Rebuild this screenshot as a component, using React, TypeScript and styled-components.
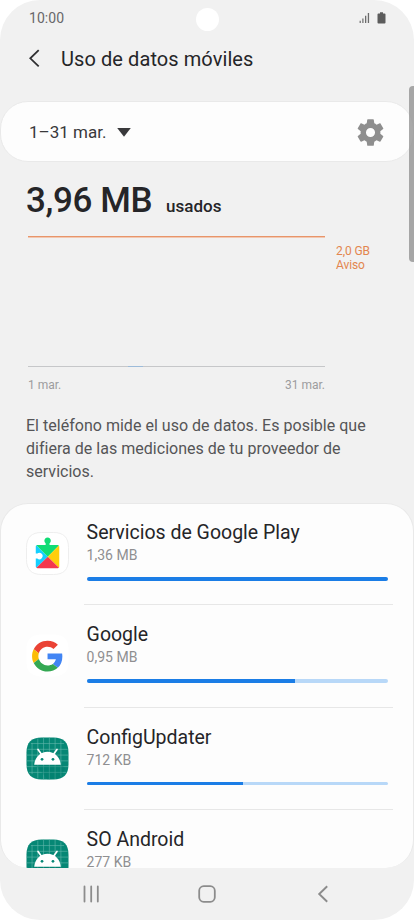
import React from "react";
import styled, { createGlobalStyle } from "styled-components";

const GlobalStyle = createGlobalStyle`
  * { box-sizing: border-box; }
  html, body { margin: 0; padding: 0; background: #fff; }
  body { font-family: Roboto, "Liberation Sans", sans-serif; color: #252528; }
  svg { display: block; flex: none; }
`;

const Screen = styled.div`
  position: relative;
  width: 414px;
  height: 920px;
  background: #f1f1f1;
  border-radius: 40px;
  overflow: hidden;
  display: flex;
  flex-direction: column;
`;

const StatusBar = styled.div`
  height: 36px;
  padding: 0 28px 0 29px;
  display: grid;
  grid-template-columns: 1fr 24px 1fr;
  align-items: center;
`;

const Clock = styled.span`
  font-size: 14px;
  letter-spacing: 0.05px;
  color: #68686a;
`;

const Camera = styled.div`
  width: 23px;
  height: 23px;
  border-radius: 50%;
  background: #fff;
  margin-top: 2px;
`;

const StatusIcons = styled.div`
  display: flex;
  justify-content: flex-end;
  align-items: center;
  gap: 7px;
`;

const Header = styled.header`
  height: 65px;
  padding: 11px 0 0 28px;
  display: flex;
  align-items: flex-start;
  gap: 19px;
`;

const Title = styled.h1`
  margin: 0;
  font-size: 20px;
  line-height: 24px;
  letter-spacing: 0.08px;
  font-weight: 400;
  white-space: nowrap;
`;

const PeriodCard = styled.section`
  height: 61px;
  border: 1px solid #e9e9e9;
  border-radius: 28px;
  background: #fdfdfd;
  padding: 1px 26px 0 28px;
  display: flex;
  align-items: center;
`;

const Period = styled.span`
  font-size: 17px;
  color: #39393b;
  margin-right: 11px;
  white-space: nowrap;
`;

const Spacer = styled.div`
  flex: 1;
`;

const Usage = styled.div`
  height: 74px;
  padding: 18px 0 0 26px;
  display: flex;
  align-items: baseline;
  gap: 14px;
  font-weight: 500;
  white-space: nowrap;
`;

const Amount = styled.span`
  font-size: 35px;
  letter-spacing: -0.4px;
  line-height: 42px;
`;

const AmountLabel = styled.span`
  font-size: 17px;
`;

const Chart = styled.section`
  height: 177px;
  padding-left: 28px;
  display: grid;
  grid-template-columns: 297px 1fr;
  column-gap: 11px;
  align-content: start;
`;

const Plot = styled.div`
  height: 131px;
  border-top: 1px solid #e8956a;
  border-bottom: 1px solid #c6c7c9;
  box-shadow: inset 0 1px #f2c8b2;
  display: flex;
  align-items: flex-end;
`;

const UsageMark = styled.div`
  width: 15px;
  height: 1px;
  margin: 0 0 -1px 100px;
  background: #9dbbd9;
`;

const Warning = styled.div`
  padding-top: 8px;
  font-size: 12px;
  letter-spacing: -0.1px;
  line-height: 14px;
  color: #e3864f;
`;

const AxisLabels = styled.div`
  display: flex;
  justify-content: space-between;
  padding-top: 11px;
  font-size: 12px;
  line-height: 14px;
  color: #9c9c9e;
`;

const Notice = styled.p`
  margin: 0;
  height: 90px;
  padding: 1px 0 0 26px;
  font-size: 16px;
  line-height: 23px;
  letter-spacing: 0.02px;
  color: #555557;
  white-space: nowrap;
`;

const AppList = styled.section`
  height: 365px;
  border: 1px solid #e9e9e9;
  border-bottom: 0;
  border-radius: 28px;
  background: #fdfdfd;
  overflow: hidden;
`;

const AppRow = styled.article`
  height: 102.3px;
  padding: 16px 20px 0 25px;
  display: grid;
  grid-template-columns: 43px 1fr;
  column-gap: 15px;
`;

const IconSlot = styled.div`
  padding-top: 12px;
`;

const AppInfo = styled.div`
  height: 85.3px;
  padding-left: 2.6px;
  border-bottom: 1px solid #e7e7e7;
`;

const AppName = styled.div`
  font-size: 19.5px;
  line-height: 25px;
  white-space: nowrap;
`;

const AppUsage = styled.div`
  font-size: 14px;
  line-height: 20px;
  color: #8f8f91;
`;

const Track = styled.div`
  margin-top: 12px;
  width: 301px;
  height: 3.5px;
  border-radius: 2px;
  background: #b8d8f8;
  overflow: hidden;
`;

const Bar = styled.div`
  height: 100%;
  background: #1b7de6;
`;

const NavBar = styled.nav`
  flex: 1;
  padding: 0 82px;
  display: flex;
  justify-content: space-between;
  align-items: center;
`;

const ScrollThumb = styled.div`
  position: absolute;
  right: 0;
  top: 86px;
  width: 5px;
  height: 176px;
  border-radius: 4px 0 0 4px;
  background: rgba(145, 145, 145, 0.78);
`;

const SignalIcon = () => (
  <svg width="11" height="12" viewBox="0 0 11 12" fill="#6c6c6c">
    <path d="M.6 8.8h1.2V11H.6zM3.3 6.5h1.2V11H3.3zM6 3.8h1.3V11H6zM8.8 1h1.3v10H8.8z" />
  </svg>
);

const BatteryIcon = () => (
  <svg width="9" height="12" viewBox="0 0 9 12" fill="#5c5c5c">
    <path d="M3 .3h3v1.2h1.6q.9 0 .9.9v8.2q0 .9-.9.9H1.4q-.9 0-.9-.9V2.4q0-.9.9-.9H3z" />
  </svg>
);

const BackIcon = () => (
  <svg width="14" height="24" viewBox="0 0 14 24" fill="none" stroke="#303032" strokeWidth="1.8">
    <path d="M10.7 3.1 2.3 11.3l8.4 8.1" />
  </svg>
);

const GearIcon = () => (
  <svg width="33" height="33" viewBox="0 0 24 24" fill="#8e8e8e">
    <path d="M19.14 12.94c.04-.3.06-.61.06-.94 0-.32-.02-.64-.07-.94l2.03-1.58c.18-.14.23-.41.12-.61l-1.92-3.32c-.12-.22-.37-.29-.59-.22l-2.39.96c-.5-.38-1.03-.7-1.62-.94l-.36-2.54c-.04-.24-.24-.41-.48-.41h-3.84c-.24 0-.43.17-.47.41l-.36 2.54c-.59.24-1.13.57-1.62.94l-2.39-.96c-.22-.08-.47 0-.59.22L2.74 8.87c-.12.21-.08.47.12.61l2.03 1.58c-.05.3-.09.63-.09.94s.02.64.07.94l-2.03 1.58c-.18.14-.23.41-.12.61l1.92 3.32c.12.22.37.29.59.22l2.39-.96c.5.38 1.03.7 1.62.94l.36 2.54c.05.24.24.41.48.41h3.84c.24 0 .44-.17.47-.41l.36-2.54c.59-.24 1.13-.56 1.62-.94l2.39.96c.22.08.47 0 .59-.22l1.92-3.32c.12-.22.07-.47-.12-.61l-2.01-1.58zM12 15.3a3.3 3.3 0 1 1 0-6.6 3.3 3.3 0 0 1 0 6.6z" />
  </svg>
);

const squircle =
  "M16 .5h12c10.5 0 15.5 5 15.5 15.5v12c0 10.5-5 15.5-15.5 15.5H16C5.5 43.5.5 38.5.5 28V16C.5 5.5 5.5.5 16 .5z";

const PlayServicesIcon = () => (
  <svg width="43" height="43" viewBox="0 0 44 44">
    <path d={squircle} fill="#fff" stroke="#eee" strokeWidth="1" />
    <path d="M10.6 13.6 22.3 25.3 10.6 36.6Q10 36.2 10 35.4v-8.2h1.6a3.3 3.3 0 1 0 0-5.2H10v-7q0-.9.6-1.4z" fill="#14cfff" />
    <path d="M10.6 13.6q.4-.3 1.2-.3h8.3v-1.7a3.3 3.3 0 1 1 4 0v1.7h8.4q.8 0 1.2.4L22.3 25.3z" fill="#10dc74" />
    <path d="M33.7 13.7q.3.4.3 1.2v20.4q0 .8-.3 1.2L22.3 25.3z" fill="#ffce0a" />
    <path d="M22.3 25.3 33.7 36.5q-.4.5-1.2.5H11.8q-.8 0-1.2-.4z" fill="#f4374d" />
  </svg>
);

const GoogleIcon = () => (
  <svg width="43" height="43" viewBox="0 0 44 44">
    <path d={squircle} fill="#fff" />
    <g transform="translate(6.2 6.8) scale(.66)">
      <path fill="#EA4335" d="M24 9.5c3.54 0 6.71 1.22 9.21 3.6l6.85-6.85C35.9 2.38 30.47 0 24 0 14.62 0 6.51 5.38 2.56 13.22l7.98 6.19C12.43 13.72 17.74 9.5 24 9.5z" />
      <path fill="#4285F4" d="M46.98 24.55c0-1.57-.15-3.09-.38-4.55H24v9.02h12.94c-.58 2.96-2.26 5.48-4.78 7.18l7.73 6c4.51-4.18 7.09-10.36 7.09-17.65z" />
      <path fill="#FBBC05" d="M10.53 28.59c-.48-1.45-.76-2.99-.76-4.59s.27-3.14.76-4.59l-7.98-6.19C.92 16.46 0 20.12 0 24c0 3.88.92 7.54 2.56 10.78l7.97-6.19z" />
      <path fill="#34A853" d="M24 48c6.48 0 11.93-2.13 15.89-5.81l-7.73-6c-2.15 1.45-4.92 2.3-8.16 2.3-6.26 0-11.57-4.22-13.47-9.91l-7.98 6.19C6.51 42.62 14.62 48 24 48z" />
    </g>
  </svg>
);

const AndroidIcon = () => (
  <svg width="43" height="43" viewBox="0 0 44 44">
    <path d={squircle} fill="#068775" />
    <path
      d="M6.2 6v32M12.1 1.5v41M18 .5v43M23.9.5v43M29.8 1v42M35.7 3.5v37M5 6.7h34M1.5 12.6h41M.5 18.5h43M.5 24.4h43M1 30.3h42M3 36.2h38"
      stroke="#65b9ac"
      strokeWidth=".6"
    />
    <path d="M9 28h27l4 4-4 9q-6 2.5-14 2.5z" fill="#00796b" opacity=".35" />
    <path d="m12.3 12.7 3.7 5.2M31.7 12.7 28 17.9" stroke="#fff" strokeWidth="1.7" strokeLinecap="round" />
    <path d="M8.4 28.5C9.1 20.7 14.6 15.2 22 15.2S34.9 20.7 35.6 28.5z" fill="#fff" />
    <circle cx="16.4" cy="22.8" r="1.4" fill="#068775" />
    <circle cx="27.6" cy="22.8" r="1.4" fill="#068775" />
  </svg>
);

const apps = [
  { name: "Servicios de Google Play", usage: "1,36 MB", percent: 100, Icon: PlayServicesIcon },
  { name: "Google", usage: "0,95 MB", percent: 69.2, Icon: GoogleIcon },
  { name: "ConfigUpdater", usage: "712 KB", percent: 52, Icon: AndroidIcon },
  { name: "SO Android", usage: "277 KB", percent: 20, Icon: AndroidIcon },
];

export default function App() {
  return (
    <>
      <GlobalStyle />
      <Screen>
        <StatusBar>
          <Clock>10:00</Clock>
          <Camera />
          <StatusIcons>
            <SignalIcon />
            <BatteryIcon />
          </StatusIcons>
        </StatusBar>
        <Header>
          <BackIcon />
          <Title>Uso de datos móviles</Title>
        </Header>
        <PeriodCard>
          <Period>1–31 mar.</Period>
          <svg width="14" height="9" viewBox="0 0 14 9" fill="#39393b">
            <path d="M.2 0h13.6L7 8.8z" />
          </svg>
          <Spacer />
          <GearIcon />
        </PeriodCard>
        <Usage>
          <Amount>3,96 MB</Amount>
          <AmountLabel>usados</AmountLabel>
        </Usage>
        <Chart>
          <Plot>
            <UsageMark />
          </Plot>
          <Warning>
            2,0 GB
            <br />
            Aviso
          </Warning>
          <AxisLabels>
            <span>1 mar.</span>
            <span>31 mar.</span>
          </AxisLabels>
        </Chart>
        <Notice>
          El teléfono mide el uso de datos. Es posible que
          <br />
          difiera de las mediciones de tu proveedor de
          <br />
          servicios.
        </Notice>
        <AppList>
          {apps.map(({ name, usage, percent, Icon }) => (
            <AppRow key={name}>
              <IconSlot>
                <Icon />
              </IconSlot>
              <AppInfo>
                <AppName>{name}</AppName>
                <AppUsage>{usage}</AppUsage>
                <Track>
                  <Bar style={{ width: `${percent}%` }} />
                </Track>
              </AppInfo>
            </AppRow>
          ))}
        </AppList>
        <NavBar>
          <svg width="18" height="18" viewBox="0 0 18 18" stroke="#8c8c8c" strokeWidth="1.8" strokeLinecap="round">
            <path d="M2.5 1.5v15M9.2 1.5v15M15.8 1.5v15" />
          </svg>
          <svg width="18" height="18" viewBox="0 0 18 18" fill="none" stroke="#8c8c8c" strokeWidth="1.8">
            <rect x="1.2" y="1.2" width="15.6" height="15.6" rx="4.5" />
          </svg>
          <svg width="18" height="18" viewBox="0 0 18 18" fill="none" stroke="#8c8c8c" strokeWidth="1.9">
            <path d="M13.2 1.2 5.2 9l8 7.8" />
          </svg>
        </NavBar>
        <ScrollThumb />
      </Screen>
    </>
  );
}
